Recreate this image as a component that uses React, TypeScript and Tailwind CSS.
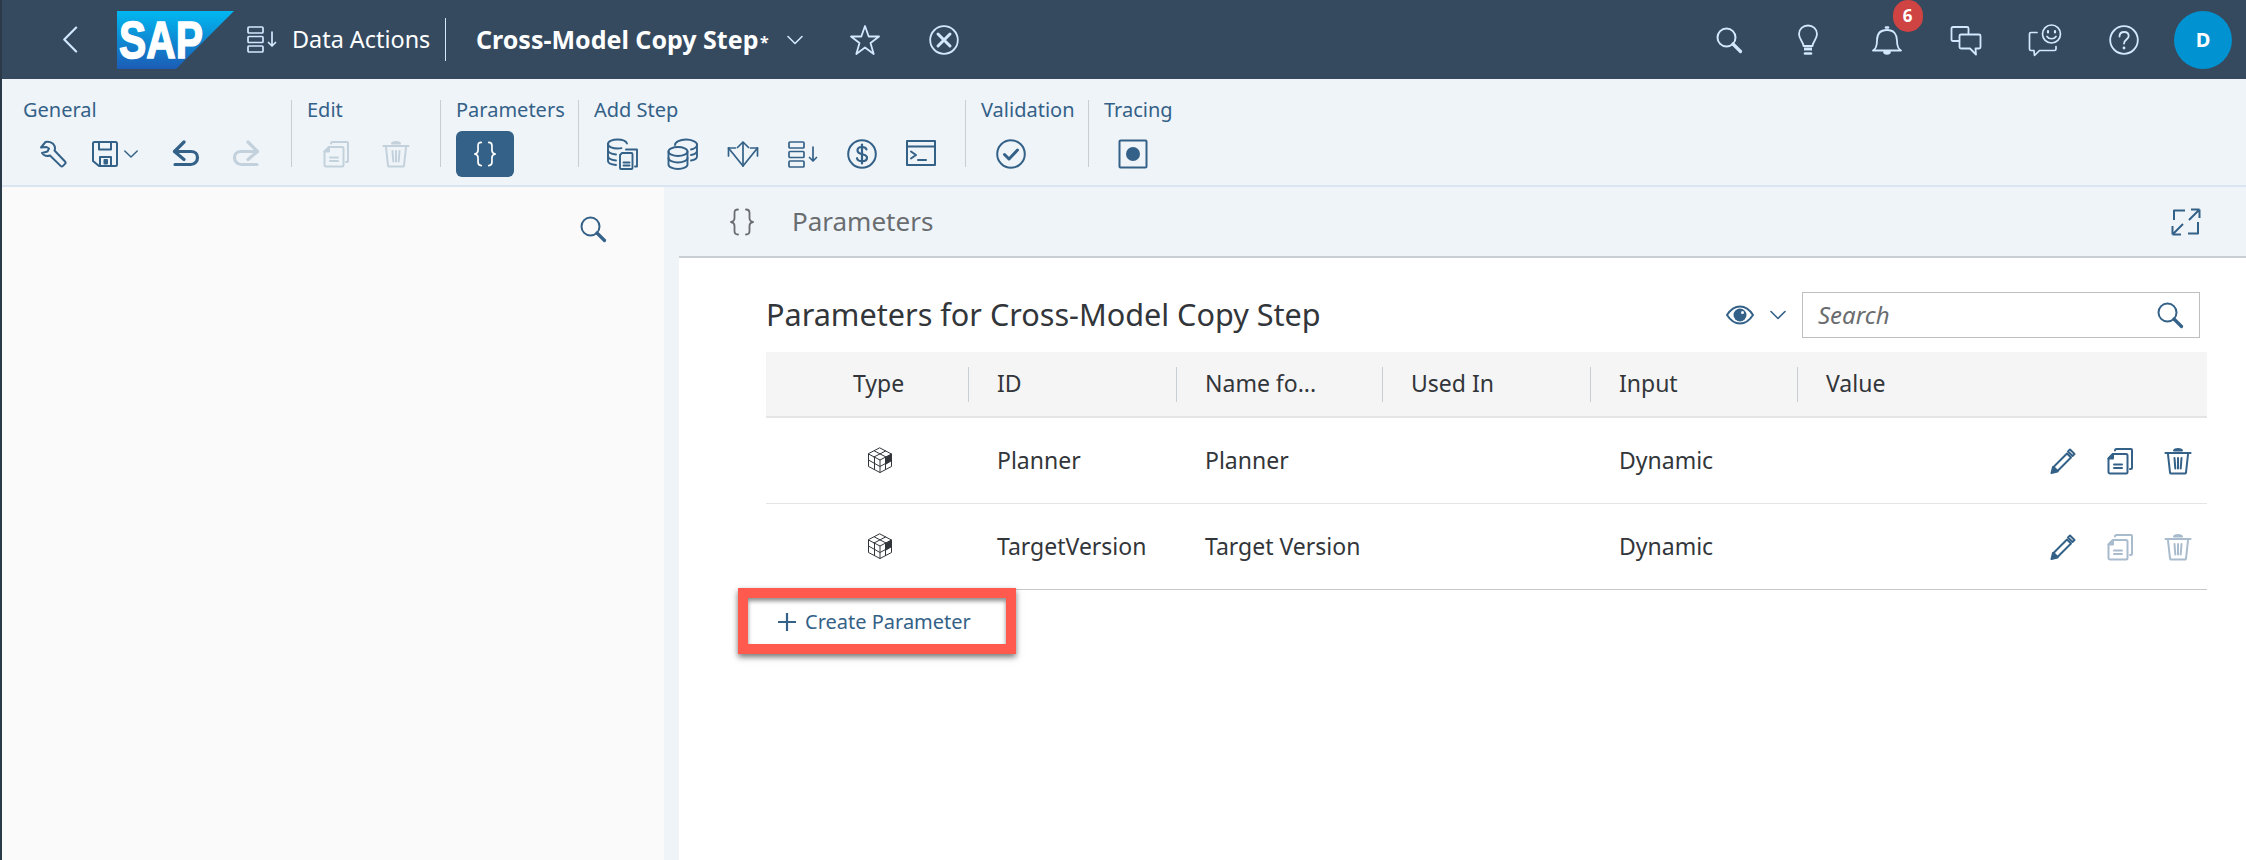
import type { ReactNode } from 'react'

const font = { fontFamily: '"Noto Sans", "Open Sans", sans-serif' }

function Icon({ size = 32, box = 32, sw = 2, children, className = '' }: { size?: number; box?: number; sw?: number; children: ReactNode; className?: string }) {
  return (
    <svg width={size} height={size} viewBox={`0 0 ${box} ${box}`} fill="none" stroke="currentColor" strokeWidth={sw} strokeLinecap="round" strokeLinejoin="round" className={className}>
      {children}
    </svg>
  )
}

const SearchGlyph = ({ size = 28 }: { size?: number }) => (
  <Icon size={size} box={28} sw={2}>
    <circle cx="11.5" cy="11.5" r="9" />
    <path d="M18 18l7.5 7.5" strokeWidth="3.2" />
  </Icon>
)

const Chevron = ({ size = 18 }: { size?: number }) => (
  <Icon size={size} box={18} sw={1.6}>
    <path d="M2 5.5l7 7 7-7" />
  </Icon>
)

const ListSort = () => (
  <svg width="31" height="27" viewBox="0 0 31 27" fill="none" stroke="currentColor" strokeWidth="1.7" strokeLinecap="round" strokeLinejoin="round">
    <rect x="1" y="1" width="15" height="6" rx="1" />
    <rect x="1" y="10.500" width="15" height="6" rx="1" />
    <rect x="1" y="20" width="15" height="6" rx="1" />
    <path d="M25 6v14M21.500 16.500L25 20l3.500-3.500" />
  </svg>
)

const Copy = () => (
  <Icon size={28} box={28} sw={2}>
    <path d="M9 3.500c0-1 .6-1.500 1.500-1.500H25c.7 0 1 .4 1 1v18c0 .7-.4 1-1 1h-1" />
    <path d="M7 7h13c.8 0 1.500.6 1.500 1.500V25c0 .8-.6 1.500-1.500 1.500H4c-.8 0-1.500-.6-1.500-1.500V11.500z" />
    <path d="M2.500 11.500H7V7z" fill="currentColor" />
    <path d="M8 17.500h8M8 21h8" />
  </Icon>
)

const Trash = () => (
  <Icon size={28} box={28} sw={2}>
    <path d="M1.500 6h25" strokeWidth="2.200" />
    <path d="M10 3.500c1-2 7-2 8 0z" fill="currentColor" />
    <path d="M4 7.500l2 18c.1.7.5 1 1.200 1h13.600c.7 0 1.100-.3 1.200-1l2-18" />
    <path d="M10.500 11l.8 10.500M14 11v10.500M17.500 11l-.8 10.500" />
  </Icon>
)

const Wrench = () => (
  <Icon size={28} box={28} sw={2}>
    <path d="M2 7.500l4.500-5.500c3.500-.6 7.500.6 9 4 .7 1.600.6 3.200 0 4.500L26 21.500c.8.900.8 1.600 0 2.400l-2 2c-.8.800-1.600.8-2.400 0L11 15.500c-3 1-6 .3-8-2.500l5.500-1.500 1.500-3-2.500-1.500z" />
  </Icon>
)

const Save = () => (
  <Icon size={28} box={28} sw={2}>
    <path d="M3.500 2h21c.9 0 1.500.6 1.500 1.500v21c0 .9-.6 1.500-1.500 1.500H8l-6-5V3.500C2 2.600 2.600 2 3.500 2z" />
    <path d="M8 2v7.500h12V2" />
    <path d="M9 26V17h11v9" />
    <rect x="13.500" y="20" width="2.500" height="3.500" fill="currentColor" />
  </Icon>
)

const Arrow = ({ flip }: { flip?: boolean }) => (
  <Icon size={28} box={28} sw={3.2} className={flip ? '-scale-x-100' : ''}>
    <path d="M12 2L2.500 11.500l9.500 8" />
    <path d="M3 11.500h16c4 0 6.500 2.500 6.500 6s-2.500 7-6.500 7H3" />
  </Icon>
)

const Braces = ({ size = 28 }: { size?: number }) => (
  <Icon size={size} box={28} sw={1.8}>
    <path d="M10 1.500c-3 0-3.500 1.500-3.500 3.500v5c0 2-1 3.500-3.500 4 2.500.5 3.500 2 3.500 4v5c0 2 .5 3.500 3.500 3.500" />
    <path d="M18 1.500c3 0 3.500 1.500 3.500 3.500v5c0 2 1 3.500 3.500 4-2.500.5-3.500 2-3.500 4v5c0 2-.5 3.500-3.500 3.500" />
  </Icon>
)

const DbCopy = () => (
  <Icon size={32} box={32} sw={1.9}>
    <path d="M1 6c0-3 5-4.500 9.500-4.500S19 3 20 5.500" />
    <path d="M1 6c0 3 5 4.500 9.500 4.500 1.500 0 3-.1 4-.4" />
    <path d="M1 6v17c0 2 3.500 3.500 8 4" />
    <path d="M1 12c0 2.500 4 4 8 4.500M1 18c0 2.500 4 4 8 4.500" />
    <path d="M19 11.500h11v17h-2" />
    <path d="M15 15h9.500c.6 0 1 .4 1 1v14c0 .6-.4 1-1 1H14c-.6 0-1-.4-1-1V17z" />
    <path d="M16.500 24.500h6M16.500 27.500h6" />
  </Icon>
)

const DbStack = () => (
  <Icon size={32} box={32} sw={1.9}>
    <ellipse cx="11" cy="13.500" rx="9.500" ry="4.500" />
    <path d="M1.500 13.500v13c0 2.500 4.500 4.500 9.500 4.500s9.500-2 9.500-4.500v-13" />
    <path d="M1.500 20c0 2.500 4.500 4.500 9.500 4.500s9.500-2 9.500-4.500" />
    <path d="M8 7c0-3 5-5.500 11-5.500S30 4 30 6.500 27 11 24 11.500" />
    <path d="M30 6.500v12c0 2-3 3.500-6 4M30 12.500c0 2.500-3 4-6 4.500" />
  </Icon>
)

const Cross = () => (
  <Icon size={32} box={32} sw={1.7}>
    <path d="M16 4v24M16 4l-5.500 5.500M16 4l5.500 5.500" />
    <path d="M1.500 10L16 28 30.500 10" />
    <path d="M1.500 10v8M1.500 10h7M30.500 10v8M30.500 10h-7" />
  </Icon>
)

const Dollar = () => (
  <Icon size={30} box={30} sw={2}>
    <circle cx="15" cy="15" r="13.800" />
    <path d="M19.500 10.500c-.5-1.800-2.300-2.500-4.500-2.500-2.600 0-4.500 1.200-4.500 3.500 0 5 9.500 2.500 9.500 7.300 0 2.300-2 3.400-5 3.400-2.500 0-4.500-1-5-3" strokeWidth="2.200" />
    <path d="M15 5.500v19" strokeWidth="2.200" />
  </Icon>
)

const Terminal = () => (
  <Icon size={30} box={30} sw={2}>
    <rect x="1" y="2" width="28" height="24" />
    <path d="M1 7.500h28" />
    <path d="M5 12.500l5 3.500-5 3.500" />
    <path d="M12 21h8" />
  </Icon>
)

const Check = () => (
  <Icon size={30} box={30} sw={2}>
    <circle cx="15" cy="15" r="13.800" />
    <path d="M8.500 15.500l4.500 4.500 8.500-9" strokeWidth="3" />
  </Icon>
)

const Tracing = () => (
  <Icon size={30} box={30} sw={2}>
    <rect x="1.500" y="1.500" width="27" height="27" rx="1" />
    <circle cx="15" cy="15" r="7" fill="currentColor" stroke="none" />
  </Icon>
)

const Bulb = () => (
  <Icon size={32} box={32} sw={1.8}>
    <path d="M11.500 22c0-4-4.500-6.500-4.500-12 0-5 4-8.500 9-8.500s9 3.500 9 8.500c0 5.500-4.500 8-4.500 12z" />
    <path d="M12 25h8" strokeWidth="3" strokeLinecap="butt" />
    <path d="M13 29.500h6" strokeWidth="2.600" />
  </Icon>
)

const Bell = () => (
  <Icon size={32} box={32} sw={1.8}>
    <path d="M2 26.500c3-1.500 4-5 4-10 0-6 3-10.500 10-10.500s10 4.500 10 10.500c0 5 1 8.500 4 10z" />
    <path d="M15 3.500h2" strokeWidth="2.600" />
    <path d="M13 28c.3 2.500 5.700 2.500 6 0z" fill="currentColor" />
  </Icon>
)

const Chats = () => (
  <Icon size={32} box={32} sw={1.8}>
    <path d="M9 17H3c-1 0-1.500-.6-1.500-1.500v-11C1.500 3.600 2 3 3 3h14c1 0 1.500.6 1.500 1.500V10" />
    <path d="M11 10.500h18c1 0 1.500.6 1.500 1.500v11c0 1-.6 1.500-1.500 1.500h-3.500l.5 6-6-6h-9c-1 0-1.500-.6-1.500-1.500V12c0-1 .6-1.500 1.500-1.500z" />
  </Icon>
)

const ChatSmile = () => (
  <Icon size={34} box={34} sw={1.7}>
    <path d="M9 9.500H3c-1 0-1.500.6-1.500 1.500v15c0 1 .6 1.500 1.500 1.500h3l.5 5 5-5h15c1 0 1.500-.6 1.500-1.500v-2.500" />
    <circle cx="23.500" cy="11" r="9" />
    <path d="M19 13.500c2 3 7 3 9 0" />
    <path d="M20 8v1.500M27 8v1.500" strokeWidth="2.200" />
  </Icon>
)

const Help = () => (
  <Icon size={30} box={30} sw={1.8}>
    <circle cx="15" cy="15" r="13.800" />
    <path d="M10.500 11.500c0-3 2-4.500 4.700-4.500s4.500 1.500 4.500 4c0 3.500-4.700 3.500-4.700 7.500" />
    <path d="M15 23v.1" strokeWidth="2.800" />
  </Icon>
)

const Expand = () => (
  <Icon size={30} box={30} sw={2}>
    <path d="M3 13V3.500h11M17 26.500h10V15" strokeLinecap="butt" />
    <path d="M18 13L28.500 2.500M28.500 2.500H20M28.500 2.500V11" strokeLinecap="butt" />
    <path d="M12 17L1.500 27.500M1.500 27.500H10M1.500 27.500V19" strokeLinecap="butt" />
  </Icon>
)

const Eye = () => (
  <svg width="28" height="20" viewBox="0 0 28 20" fill="none" stroke="currentColor" strokeWidth="2">
    <path d="M1 10c3.500-5.500 8-8.500 13-8.500S23.500 4.500 27 10c-3.500 5.500-8 8.500-13 8.500S4.500 15.500 1 10z" />
    <circle cx="14" cy="10" r="6.500" fill="currentColor" stroke="none" />
    <circle cx="16.500" cy="7.500" r="1.500" fill="#fff" stroke="none" />
  </svg>
)

const Pencil = () => (
  <Icon size={26} box={26} sw={2}>
    <path d="M7.500 23L21 9.500l-4-4L3.500 19z" />
    <path d="M18 3.500l2-2 4.500 4.500-2 2-4.500-4.500z" />
    <path d="M1.500 25l1.500-6 4.500 4.500z" fill="currentColor" />
  </Icon>
)

const Cube = () => (
  <Icon size={26} box={26} sw={1} className="text-[#32363a]">
    <path d="M13 1l11.500 6v12.500L13 25.500 1.500 19.500V7z" />
    <path d="M1.500 7L13 13l11.500-6M13 13v12.500" />
    <path d="M7.500 4L19 10M18.500 4L7 10M1.500 13L13 19.500l5.500-3M7.500 10v12.500M18.500 10v12.500" />
    <path d="M19 10.500l5-3v6.500l-5 3z" fill="currentColor" />
  </Icon>
)

function Logo() {
  return (
    <svg width="117" height="58" viewBox="0 0 117 58">
      <defs>
        <linearGradient id="sap" x1="0" y1="0" x2="0" y2="1">
          <stop offset="0" stopColor="#00b8f1" />
          <stop offset="1" stopColor="#1c5cb6" />
        </linearGradient>
      </defs>
      <polygon points="0,0 117,0 59,58 0,58" fill="url(#sap)" />
      <text x="2" y="47" fill="#fff" fontFamily="Liberation Sans" fontWeight="700" fontSize="52" textLength="84" lengthAdjust="spacingAndGlyphs" stroke="#fff" strokeWidth="1.5">SAP</text>
    </svg>
  )
}

function HeaderBtn({ children, w }: { children: ReactNode; w: string }) {
  return <div className={`flex items-center justify-center ${w}`}>{children}</div>
}

function Group({ label, width, first, children }: { label: string; width: string; first?: boolean; children: ReactNode }) {
  return (
    <div className={`${width} relative flex flex-col`}>
      {!first && <div className="absolute left-0 top-[21px] h-[67px] w-px bg-[#c8ced3]" />}
      <div className="h-[42px] pt-[18px] text-[20px] leading-[26px] whitespace-nowrap text-[#346187] pl-[16px]">{label}</div>
      <div className="flex h-[50px] items-center mt-[8px]">{children}</div>
    </div>
  )
}

const rows = [
  { id: 'Planner', name: 'Planner', disabled: false },
  { id: 'TargetVersion', name: 'Target Version', disabled: true },
]

const columns = ['ID', 'Name fo...', 'Used In', 'Input', 'Value']
const grid = 'grid grid-cols-[202px_208px_206px_208px_207px_1fr]'

export default function App() {
  return (
    <div className="flex h-[860px] w-[2246px] overflow-hidden bg-white text-[#32363a]" style={font}>
      <div className="w-[2px] shrink-0 bg-[#2b3a48]" />
      <div className="flex min-w-0 flex-1 flex-col">
        <header className="flex h-[79px] shrink-0 items-center bg-[#354a5f] text-white">
          <div className="flex w-[115px] pl-[54px] text-[#d1e8ff]">
            <Icon size={33} box={36} sw={2.4}>
              <path d="M22 5L9 18l13 13" />
            </Icon>
          </div>
          <Logo />
          <div className="ml-[13px] text-[#d1e8ff]"><ListSort /></div>
          <span className="ml-[14px] w-[138px] text-[23.4px] whitespace-nowrap">Data Actions</span>
          <div className="ml-[15px] h-[43px] w-px bg-[#d1e8ff]" />
          <span className="ml-[30px] w-[279px] text-[25px] font-bold whitespace-nowrap">Cross-Model Copy Step</span>
          <span className="ml-[5px] mt-[4px] text-[16px] font-bold">*</span>
          <div className="ml-[17px] text-[#d1e8ff]"><Chevron /></div>
          <div className="ml-[45px] text-[#d1e8ff]"><Icon size={32} box={32} sw={1.8}><path d="M16 2l3.700 10.500H30l-8.500 6.500 3.200 11L16 23.500 7.300 30l3.200-11L2 12.500h10.300z" /></Icon></div>
          <div className="ml-[48px] text-[#d1e8ff]">
            <Icon size={30} box={30} sw={1.8}>
              <circle cx="15" cy="15" r="13.800" />
              <path d="M9 9l12 12M21 9L9 21" strokeWidth="3" />
            </Icon>
          </div>
          <div className="ml-auto flex items-center pr-[14px] text-[#d1e8ff]">
            <HeaderBtn w="w-[79px]"><SearchGlyph /></HeaderBtn>
            <HeaderBtn w="w-[79px]"><Bulb /></HeaderBtn>
            <HeaderBtn w="w-[79px]">
              <div className="relative">
                <Bell />
                <span className="absolute -right-[20px] -top-[24px] flex h-[32px] w-[30px] items-center justify-center rounded-full bg-[#d04343] text-[17px] font-bold text-white">6</span>
              </div>
            </HeaderBtn>
            <HeaderBtn w="w-[79px]"><Chats /></HeaderBtn>
            <HeaderBtn w="w-[79px]"><ChatSmile /></HeaderBtn>
            <HeaderBtn w="w-[79px]"><Help /></HeaderBtn>
            <div className="ml-[11px] flex h-[58px] w-[58px] items-center justify-center rounded-full bg-[#0092d1] text-[20px] font-bold text-white">D</div>
          </div>
        </header>

        <div className="flex h-[108px] shrink-0 border-b-2 border-[#d9e6f2] bg-[#eff4f9] pl-[5px]">
          <Group label="General" first width="w-[284px]">
            <div className="flex items-center pl-[32px] text-[#346187]">
              <Wrench />
              <div className="ml-[24px]"><Save /></div>
              <div className="ml-[4px]"><Chevron size={16} /></div>
              <div className="ml-[33px]"><Arrow /></div>
              <div className="ml-[32px] text-[#c3d1dc]"><Arrow flip /></div>
            </div>
          </Group>
          <Group label="Edit" width="w-[149px]">
            <div className="flex items-center gap-[32px] pl-[31px] text-[#c3d1dc]">
              <Copy />
              <Trash />
            </div>
          </Group>
          <Group label="Parameters" width="w-[138px]">
            <div className="ml-[16px] flex h-[46px] w-[58px] items-center justify-center rounded-[6px] bg-[#346187] text-white">
              <Braces size={26} />
            </div>
          </Group>
          <Group label="Add Step" width="w-[387px]">
            <div className="flex items-center gap-[28px] pl-[29px] text-[#346187]">
              <DbCopy />
              <DbStack />
              <Cross />
              <div className="ml-[1px]"><ListSort /></div>
              <Dollar />
              <div className="ml-[1px]"><Terminal /></div>
            </div>
          </Group>
          <Group label="Validation" width="w-[123px]">
            <div className="pl-[31px] text-[#346187]"><Check /></div>
          </Group>
          <Group label="Tracing" width="w-[140px]">
            <div className="pl-[30px] text-[#346187]"><Tracing /></div>
          </Group>
        </div>

        <div className="flex min-h-0 flex-1 bg-[#eff4f9]">
          <aside className="flex w-[662px] shrink-0 justify-end bg-[#fafafa] pt-[28px] pr-[57px] text-[#346187]">
            <div><SearchGlyph /></div>
          </aside>
          <main className="ml-[15px] min-w-0 flex-1">
            <div className="flex h-[71px] items-center border-b-2 border-[#c8ced3] bg-[#eff4f9] pl-[49px] pr-[45px]">
              <div className="text-[#6a6d70]"><Braces /></div>
              <span className="ml-[36px] text-[26px] text-[#6a6d70]">Parameters</span>
              <div className="ml-auto text-[#346187]"><Expand /></div>
            </div>
            <div className="relative h-full bg-white pl-[87px] pr-[39px]">
              <div className="flex h-[94px] items-center pt-[20px]">
                <h1 className="text-[30.6px] font-normal whitespace-nowrap text-[#32363a]">Parameters for Cross-Model Copy Step</h1>
                <div className="ml-auto mr-[7px] flex items-center text-[#346187]">
                  <Eye />
                  <div className="ml-[15px] mr-[15px]"><Chevron /></div>
                  <div className="flex h-[46px] w-[398px] items-center justify-between border border-[#bfbfbf] pl-[15px] pr-[15px]">
                    <span className="text-[24px] italic text-[#6a6d70]">Search</span>
                    <SearchGlyph />
                  </div>
                </div>
              </div>
              <div className={`${grid} h-[66px] items-center border-b-2 border-[#e5e5e5] bg-[#f5f5f5] text-[23px]`}>
                <div className="pl-[87px] pb-[2px]">Type</div>
                {columns.map((c) => (
                  <div key={c} className="flex h-[35px] items-center border-l border-[#c8ced3] pl-[28px] pb-[2px]">{c}</div>
                ))}
              </div>
              {rows.map((r, i) => (
                <div key={r.id} className={`${grid} h-[86px] items-center border-b text-[23px] ${i === 1 ? 'border-[#c8c8c8]' : 'border-[#e5e5e5]'}`}>
                  <div className="flex justify-center pl-[25px] pb-[2px]"><Cube /></div>
                  <div className="pl-[29px] whitespace-nowrap">{r.id}</div>
                  <div className="pl-[29px] whitespace-nowrap">{r.name}</div>
                  <div />
                  <div className="pl-[29px]">Dynamic</div>
                  <div className="flex items-center justify-end gap-[30px] pr-[15px] text-[#346187]">
                    <Pencil />
                    <div className={r.disabled ? 'text-[#a9bccd]' : ''}><Copy /></div>
                    <div className={r.disabled ? 'text-[#a9bccd]' : ''}><Trash /></div>
                  </div>
                </div>
              ))}
              <div className="flex h-[64px] items-center pl-[12px] text-[20px] text-[#346187]">
                <Icon size={18} box={18} sw={2.2}><path d="M9 0v18M0 9h18" strokeLinecap="butt" /></Icon>
                <span className="ml-[9px] whitespace-nowrap">Create Parameter</span>
              </div>
              <div className="absolute left-[59px] top-[330px] h-[66px] w-[278px] border-[10px] border-[#ff5a4d] shadow-[0_3px_6px_rgba(0,0,0,0.55),inset_0_3px_4px_rgba(0,0,0,0.45)]" />
            </div>
          </main>
        </div>
      </div>
    </div>
  )
}
